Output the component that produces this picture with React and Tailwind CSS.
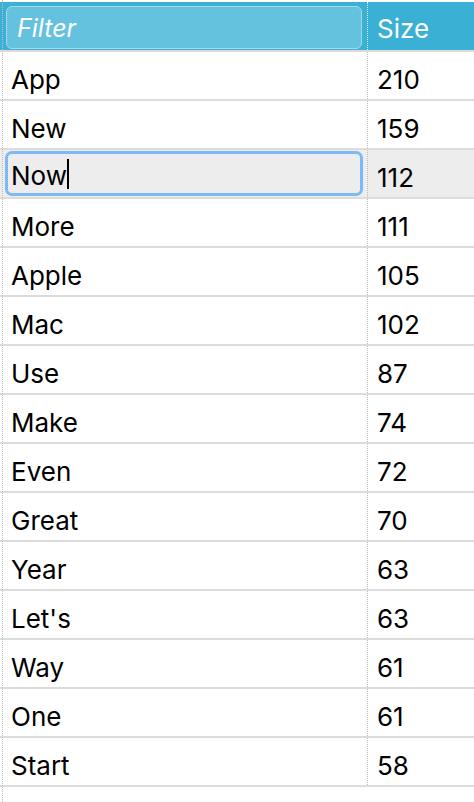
import React from "react";

const ROWS = [
  ["App", 210],
  ["New", 159],
  ["Now", 112],
  ["More", 111],
  ["Apple", 105],
  ["Mac", 102],
  ["Use", 87],
  ["Make", 74],
  ["Even", 72],
  ["Great", 70],
  ["Year", 63],
  ["Let's", 63],
  ["Way", 61],
  ["One", 61],
  ["Start", 58],
];

const EDITING = 2;

export default function App() {
  return (
    <div
      className="relative w-[474px] h-[802px] overflow-hidden bg-white pt-[2px] text-[26px] leading-none text-black"
      style={{ fontFamily: "Inter, 'Noto Sans', sans-serif" }}
    >
      {/* header */}
      <div className="grid grid-cols-[368px_1fr] h-[50px] bg-[#3ab0d5] border-b-[2px] border-[#dcdcdc]">
        <div className="flex items-center pl-[6px] pr-[5px] pt-[2px] border-r-[1.5px] border-dotted border-[#d6eef7]">
          <div className="flex items-center w-full h-[43px] rounded-[6px] bg-[#64c2df] border-[1.5px] border-[#a6d9ea] pl-[10px] pt-[2px]">
            <span className="italic text-white text-[25px]">Filter</span>
          </div>
        </div>
        <div className="flex items-center pl-[9px] pt-[5px] text-white">Size</div>
      </div>

      {/* rows */}
      {ROWS.map(([word, n], i) => (
        <div
          key={word + i}
          className={`grid grid-cols-[368px_1fr] h-[49px] border-b-[2px] border-[#dcdcdc] ${
            i === EDITING ? "bg-[#ededed]" : "bg-white"
          }`}
        >
          <div className="flex items-center border-r-[1.5px] border-dotted border-[#bdbdbd]">
            {i === EDITING ? (
              <div className="flex items-center ml-[5px] mr-[4px] w-full h-[45px] rounded-[7px] border-[3px] border-[#7db9f5] pl-[3px] pt-[5px]">
                <span>{word}</span>
                <span className="inline-block w-[2px] h-[30px] bg-black -mt-[4px]" />
              </div>
            ) : (
              <span className="pl-[11px] pt-[9px]">{word}</span>
            )}
          </div>
          <div className="flex items-center pl-[9px] pt-[9px]">{n}</div>
        </div>
      ))}

      {/* left dotted rule */}
      <div className="absolute left-[2px] top-0 bottom-0 border-l-[1.5px] border-dotted border-[#bdbdbd]" />
    </div>
  );
}
